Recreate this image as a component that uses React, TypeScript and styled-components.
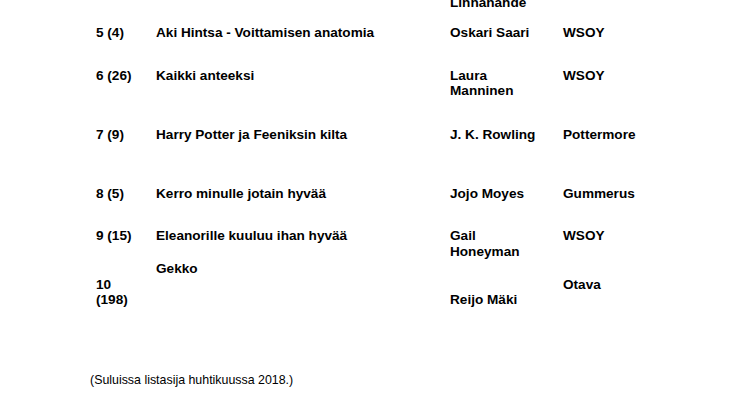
import styled, { createGlobalStyle } from "styled-components";

const GlobalStyle = createGlobalStyle`
    html, body {
        margin: 0;
        padding: 0;
        background: #ffffff;
    }
    body {
        font-family: "Liberation Sans", Arial, sans-serif;
        color: #000000;
    }
`

const Page = styled.div`
    margin-top: -5px;
    padding-left: 96px;
`

const List = styled.div`
    display: flex;
    flex-direction: column;
`

const Row = styled.div<{ $h: number }>`
    display: grid;
    grid-template-columns: 60px 294px 113px 140px;
    height: ${p => p.$h}px;
    font-size: 13.6px;
    font-weight: 700;
    line-height: 15.6px;
`

const Cell = styled.div<{ $align?: "start" | "center" | "end" }>`
    padding-right: 16px;
    align-self: ${p => p.$align || "start"};
`

const Note = styled.p`
    margin: 64.6px 0 0 -6px;
    font-size: 12.4px;
    font-weight: 400;
    line-height: 14.25px;
`

type Book = {
    rank: string,
    title: string,
    author: string,
    publisher: string,
    height: number,
    align?: {
        rank?: "start" | "center" | "end",
        title?: "start" | "center" | "end",
        author?: "start" | "center" | "end",
        publisher?: "start" | "center" | "end",
    }
}

const books: Book[] = [
    { rank: "", title: "", author: "Linnanahde", publisher: "", height: 29.5 },
    { rank: "5 (4)", title: "Aki Hintsa - Voittamisen anatomia", author: "Oskari Saari", publisher: "WSOY", height: 43 },
    { rank: "6 (26)", title: "Kaikki anteeksi", author: "Laura Manninen", publisher: "WSOY", height: 59.5 },
    { rank: "7 (9)", title: "Harry Potter ja Feeniksin kilta", author: "J. K. Rowling", publisher: "Pottermore", height: 59 },
    { rank: "8 (5)", title: "Kerro minulle jotain hyvää", author: "Jojo Moyes", publisher: "Gummerus", height: 42 },
    { rank: "9 (15)", title: "Eleanorille kuuluu ihan hyvää", author: "Gail Honeyman", publisher: "WSOY", height: 33 },
    {
        rank: "10 (198)", title: "Gekko", author: "Reijo Mäki", publisher: "Otava", height: 47,
        align: { rank: "end", title: "start", author: "end", publisher: "center" },
    },
]

export default function App() {
    return (
        <>
            <GlobalStyle />
            <Page>
                <List>
                    {books.map((b, i) => (
                        <Row key={i} $h={b.height}>
                            <Cell $align={b.align?.rank}>{b.rank}</Cell>
                            <Cell $align={b.align?.title}>{b.title}</Cell>
                            <Cell $align={b.align?.author}>{b.author}</Cell>
                            <Cell $align={b.align?.publisher}>{b.publisher}</Cell>
                        </Row>
                    ))}
                </List>
                <Note>(Suluissa listasija huhtikuussa 2018.)</Note>
            </Page>
        </>
    )
}
